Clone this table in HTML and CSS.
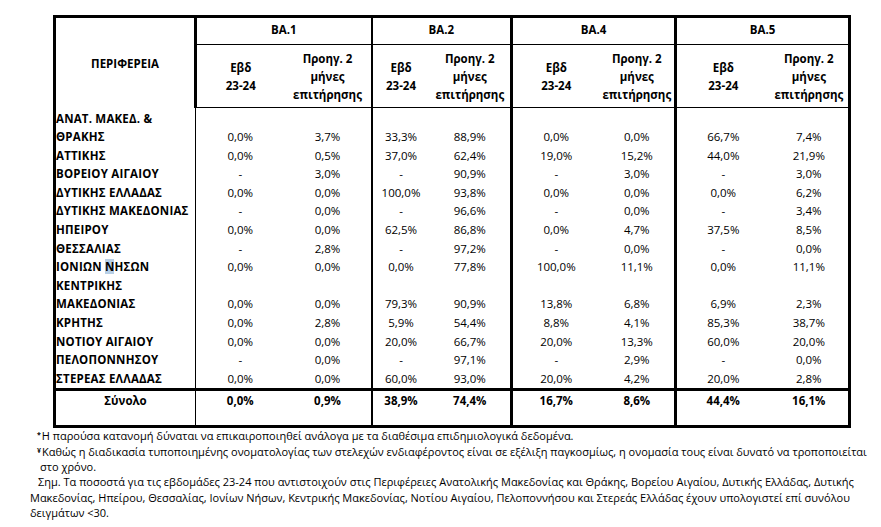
FILE: index.html
```html
<!DOCTYPE html>
<html lang="el">
<head>
<meta charset="utf-8">
<title>Κατανομή</title>
<link rel="stylesheet" href="styles.css">
</head>
<body>
<div class="page">
<table class="t">
  <colgroup>
    <col class="c-reg">
    <col class="c-a1"><col class="c-b1">
    <col class="c-a2"><col class="c-b2">
    <col class="c-a4"><col class="c-b4">
    <col class="c-a5"><col class="c-b5">
  </colgroup>
  <thead>
    <tr class="h1">
      <th class="reg-h" rowspan="2">ΠΕΡΙΦΕΡΕΙΑ</th>
      <th class="grp g1" colspan="2">ΒΑ.1</th>
      <th class="grp g2" colspan="2">ΒΑ.2</th>
      <th class="grp g4" colspan="2">ΒΑ.4</th>
      <th class="grp g5" colspan="2">ΒΑ.5</th>
    </tr>
    <tr class="h2">
      <th class="sub">Εβδ<br>23-24</th><th class="sub g1">Προηγ. 2<br>μήνες<br>επιτήρησης</th>
      <th class="sub">Εβδ<br>23-24</th><th class="sub g2">Προηγ. 2<br>μήνες<br>επιτήρησης</th>
      <th class="sub">Εβδ<br>23-24</th><th class="sub g4">Προηγ. 2<br>μήνες<br>επιτήρησης</th>
      <th class="sub">Εβδ<br>23-24</th><th class="sub g5">Προηγ. 2<br>μήνες<br>επιτήρησης</th>
    </tr>
  </thead>
  <tbody>
    <tr class="first"><td class="reg">ΑΝΑΤ. ΜΑΚΕΔ. &amp;<br>ΘΡΑΚΗΣ</td><td>0,0%</td><td class="g1">3,7%</td><td>33,3%</td><td class="g2">88,9%</td><td>0,0%</td><td class="g4">0,0%</td><td>66,7%</td><td class="g5">7,4%</td></tr>
    <tr><td class="reg">ΑΤΤΙΚΗΣ</td><td>0,0%</td><td class="g1">0,5%</td><td>37,0%</td><td class="g2">62,4%</td><td>19,0%</td><td class="g4">15,2%</td><td>44,0%</td><td class="g5">21,9%</td></tr>
    <tr><td class="reg">ΒΟΡΕΙΟΥ ΑΙΓΑΙΟΥ</td><td>-</td><td class="g1">3,0%</td><td>-</td><td class="g2">90,9%</td><td>-</td><td class="g4">3,0%</td><td>-</td><td class="g5">3,0%</td></tr>
    <tr><td class="reg">ΔΥΤΙΚΗΣ ΕΛΛΑΔΑΣ</td><td>0,0%</td><td class="g1">0,0%</td><td>100,0%</td><td class="g2">93,8%</td><td>0,0%</td><td class="g4">0,0%</td><td>0,0%</td><td class="g5">6,2%</td></tr>
    <tr><td class="reg">ΔΥΤΙΚΗΣ ΜΑΚΕΔΟΝΙΑΣ</td><td>-</td><td class="g1">0,0%</td><td>-</td><td class="g2">96,6%</td><td>-</td><td class="g4">0,0%</td><td>-</td><td class="g5">3,4%</td></tr>
    <tr><td class="reg">ΗΠΕΙΡΟΥ</td><td>0,0%</td><td class="g1">0,0%</td><td>62,5%</td><td class="g2">86,8%</td><td>0,0%</td><td class="g4">4,7%</td><td>37,5%</td><td class="g5">8,5%</td></tr>
    <tr><td class="reg">ΘΕΣΣΑΛΙΑΣ</td><td>-</td><td class="g1">2,8%</td><td>-</td><td class="g2">97,2%</td><td>-</td><td class="g4">0,0%</td><td>-</td><td class="g5">0,0%</td></tr>
    <tr><td class="reg">ΙΟΝΙΩΝ <span class="sel">Ν</span>ΗΣΩΝ</td><td>0,0%</td><td class="g1">0,0%</td><td>0,0%</td><td class="g2">77,8%</td><td>100,0%</td><td class="g4">11,1%</td><td>0,0%</td><td class="g5">11,1%</td></tr>
    <tr><td class="reg">ΚΕΝΤΡΙΚΗΣ<br>ΜΑΚΕΔΟΝΙΑΣ</td><td>0,0%</td><td class="g1">0,0%</td><td>79,3%</td><td class="g2">90,9%</td><td>13,8%</td><td class="g4">6,8%</td><td>6,9%</td><td class="g5">2,3%</td></tr>
    <tr><td class="reg">ΚΡΗΤΗΣ</td><td>0,0%</td><td class="g1">2,8%</td><td>5,9%</td><td class="g2">54,4%</td><td>8,8%</td><td class="g4">4,1%</td><td>85,3%</td><td class="g5">38,7%</td></tr>
    <tr><td class="reg">ΝΟΤΙΟΥ ΑΙΓΑΙΟΥ</td><td>0,0%</td><td class="g1">0,0%</td><td>20,0%</td><td class="g2">66,7%</td><td>20,0%</td><td class="g4">13,3%</td><td>60,0%</td><td class="g5">20,0%</td></tr>
    <tr><td class="reg">ΠΕΛΟΠΟΝΝΗΣΟΥ</td><td>-</td><td class="g1">0,0%</td><td>-</td><td class="g2">97,1%</td><td>-</td><td class="g4">2,9%</td><td>-</td><td class="g5">0,0%</td></tr>
    <tr class="last"><td class="reg">ΣΤΕΡΕΑΣ ΕΛΛΑΔΑΣ</td><td>0,0%</td><td class="g1">0,0%</td><td>60,0%</td><td class="g2">93,0%</td><td>20,0%</td><td class="g4">4,2%</td><td>20,0%</td><td class="g5">2,8%</td></tr>
  </tbody>
  <tfoot>
    <tr class="tot"><td class="reg-t">Σύνολο</td><td>0,0%</td><td class="g1">0,9%</td><td>38,9%</td><td class="g2">74,4%</td><td>16,7%</td><td class="g4">8,6%</td><td>44,4%</td><td class="g5">16,1%</td></tr>
  </tfoot>
</table>
<div class="notes">
  <div class="ln ind1"><sup class="mk">*</sup>Η παρούσα κατανομή δύναται να επικαιροποιηθεί ανάλογα με τα διαθέσιμα επιδημιολογικά δεδομένα.</div>
  <div class="ln ind1"><sup class="mk mk2">¥</sup>Καθώς η διαδικασία τυποποιημένης ονοματολογίας των στελεχών ενδιαφέροντος είναι σε εξέλιξη παγκοσμίως, η ονομασία τους είναι δυνατό να τροποποιείται</div>
  <div class="ln ind2">στο χρόνο.</div>
  <div class="ln ind3">Σημ. Τα ποσοστά για τις εβδομάδες 23-24 που αντιστοιχούν στις Περιφέρειες Ανατολικής Μακεδονίας και Θράκης, Βορείου Αιγαίου, Δυτικής Ελλάδας, Δυτικής</div>
  <div class="ln">Μακεδονίας, Ηπείρου, Θεσσαλίας, Ιονίων Νήσων, Κεντρικής Μακεδονίας, Νοτίου Αιγαίου, Πελοποννήσου και Στερεάς Ελλάδας έχουν υπολογιστεί επί συνόλου</div>
  <div class="ln">δειγμάτων &lt;30.</div>
</div>
</div>
</body>
</html>
```
FILE: styles.css
```css
html, body {
  margin: 0;
  padding: 0;
  background: #ffffff;
}
body {
  font-family: "Open Sans", "Noto Sans", sans-serif;
  color: #000000;
}
.page {
  padding-top: 15px;
}
.t {
  margin-left: 53px;
  border-collapse: collapse;
  table-layout: fixed;
  width: 798px;
  border: 3px solid #000;
  font-size: 11.5px;
}
.c-reg { width: 141px; }
.c-a1 { width: 89px; }
.c-b1 { width: 87px; }
.c-a2 { width: 58px; }
.c-b2 { width: 82px; }
.c-a4 { width: 88px; }
.c-b4 { width: 76px; }
.c-a5 { width: 94px; }
.c-b5 { width: 80px; }

th, td {
  padding: 0;
  text-align: center;
  vertical-align: bottom;
  white-space: nowrap;
}
th {
  font-weight: 700;
}
.h1 th {
  height: 28px;
  vertical-align: middle;
  border-bottom: 1px solid #000;
  padding-bottom: 4px;
  box-sizing: border-box;
}
.h2 th {
  height: 63px;
  vertical-align: middle;
  line-height: 18px;
  border-bottom: 1px solid #000;
  padding-top: 2px;
  box-sizing: border-box;
}
.h1 th.reg-h {
  vertical-align: middle;
  border-right: 3px solid #000;
  border-bottom: none;
  padding-top: 2px;
  padding-bottom: 0;
}
.g1 { border-right: 2px solid #000; }
.g2, .g4, .g5 { border-right: 3px solid #000; }

tbody td {
  line-height: 18.6px;
  font-weight: 400;
}
tbody tr.first td {
  padding-top: 2px;
}
td.reg {
  text-align: left;
  font-weight: 700;
  letter-spacing: 0.2px;
  border-right: 1px solid #000;
}
.sel {
  background: #b7cfe6;
}
.tot td {
  border-top: 3px solid #000;
  font-weight: 700;
  vertical-align: top;
  line-height: 18.6px;
  height: 37px;
  box-sizing: border-box;
  padding-top: 1px;
}
.tot .reg-t {
  border-right: 1px solid #000;
}
.notes {
  margin-top: 0;
  margin-left: 30px;
  font-size: 11px;
  line-height: 15.3px;
  white-space: nowrap;
}
.ln.ind1 { padding-left: 7px; }
.ln.ind2 { padding-left: 10px; }
.ln.ind3 { padding-left: 8px; }
.mk {
  font-size: 7px;
  vertical-align: 3px;
  line-height: 0;
  font-weight: 700;
  margin-right: 1px;
}
```
